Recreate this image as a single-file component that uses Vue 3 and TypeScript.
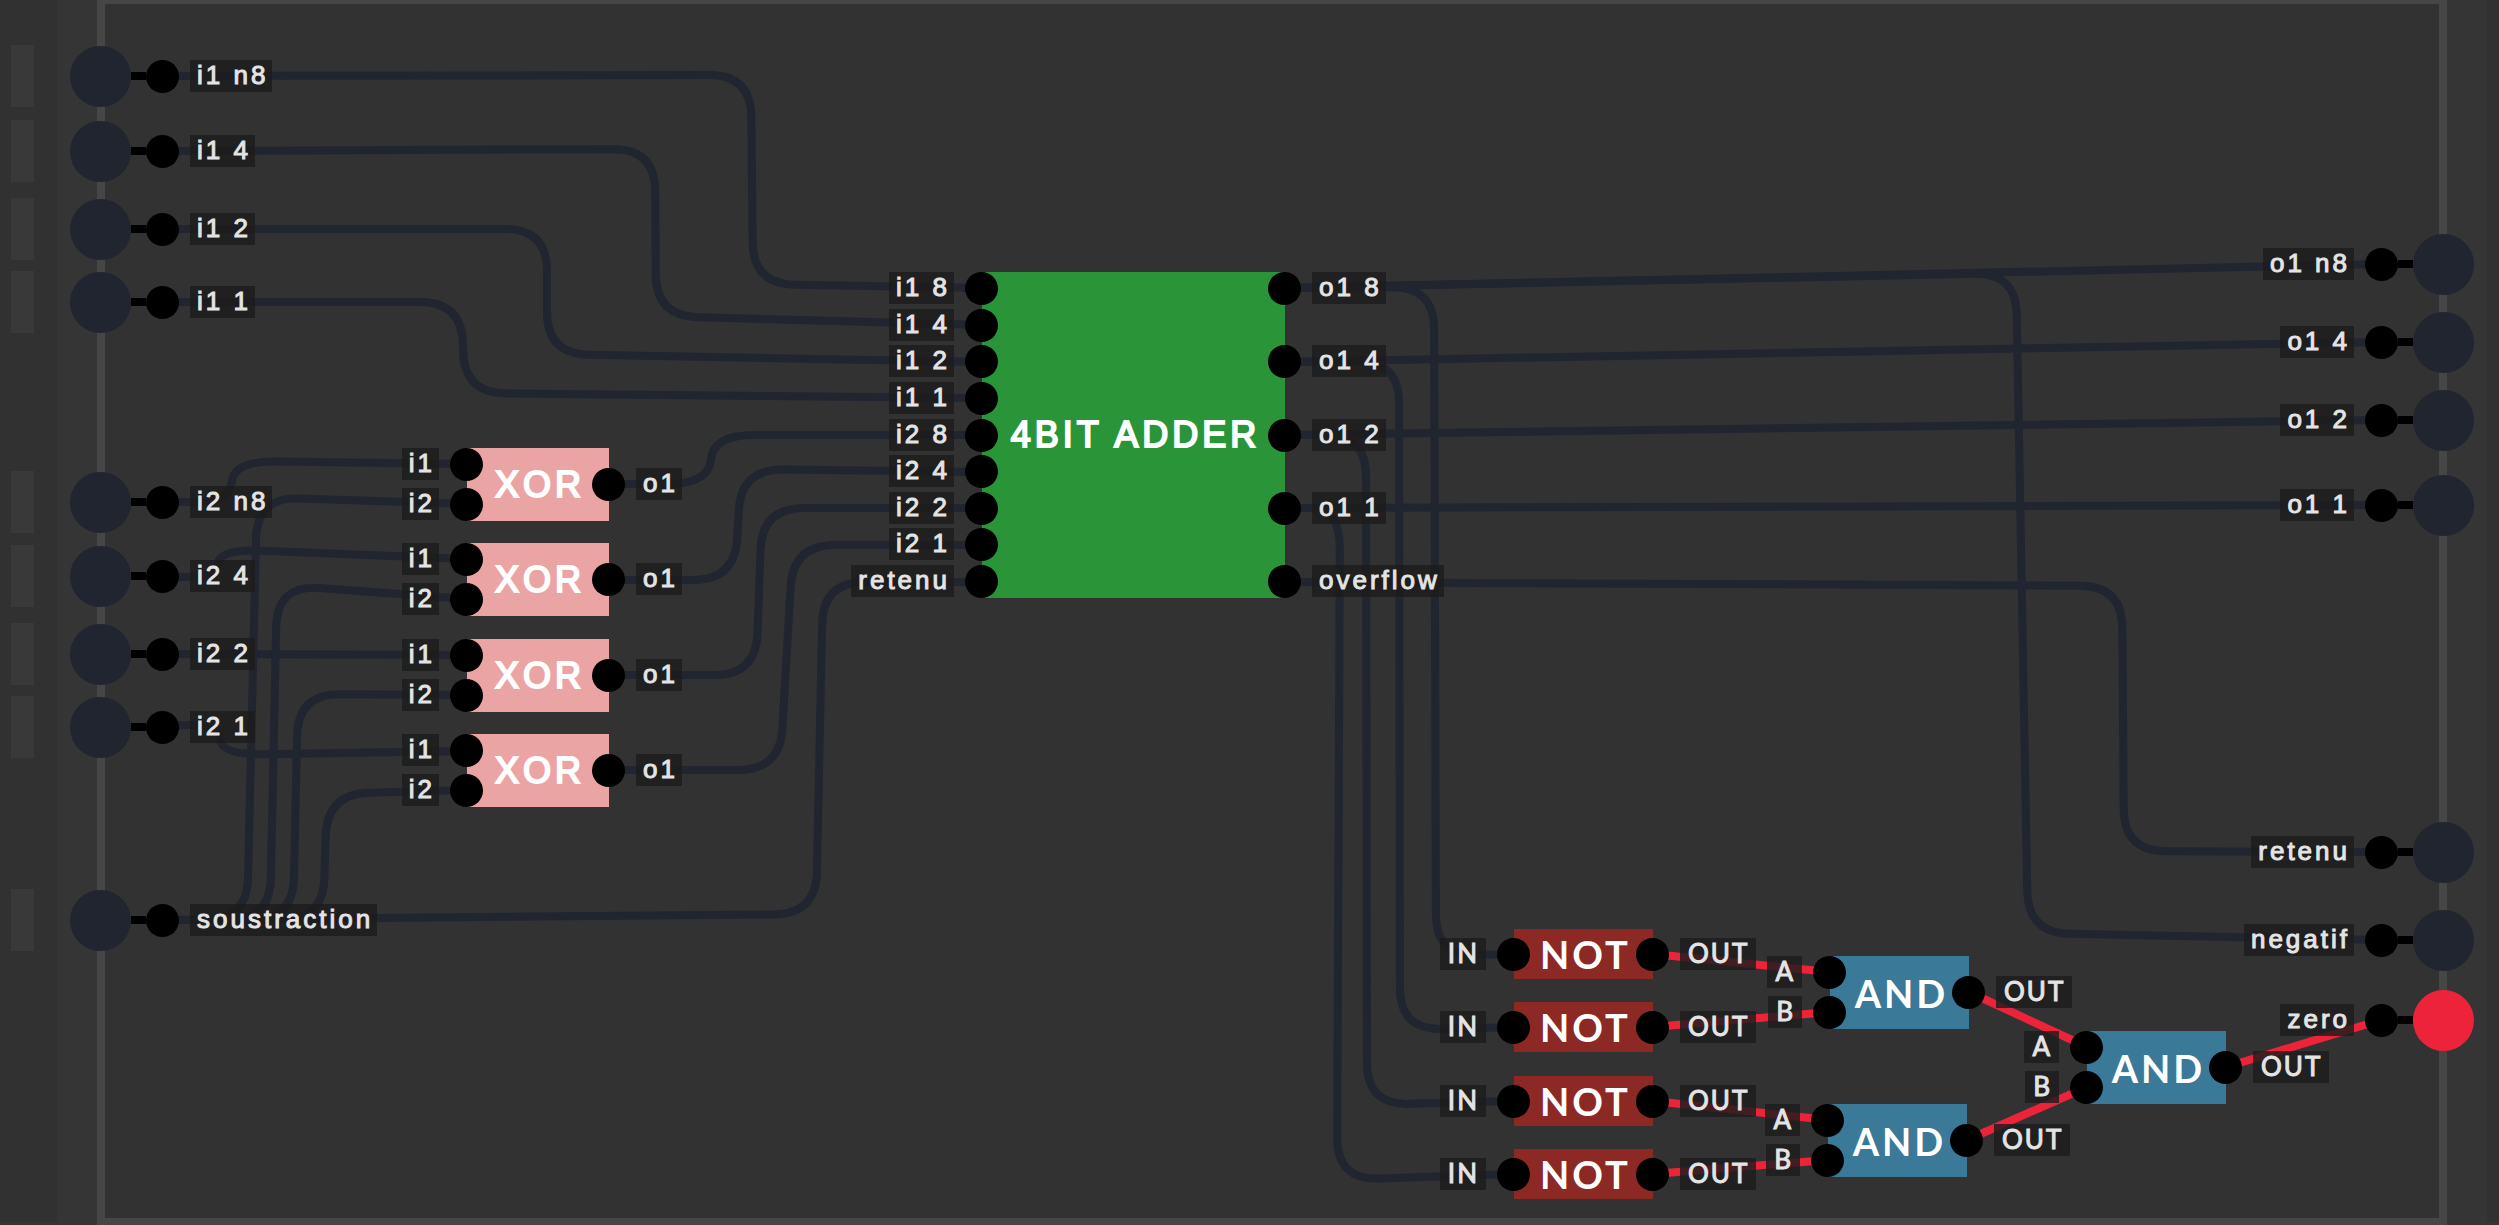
<script setup lang="ts">
import { computed, onBeforeUnmount, onMounted, ref } from 'vue'

type Point = [number, number]
type Face = 'custom' | 'builtin'

interface Pin { id: string; label: string; y: number; on: boolean }
interface Chip {
  id: string
  name: string
  kind: 'xor' | 'adder' | 'not' | 'and'
  face: Face
  x: number
  y: number
  inputs: string[]
  outputs: string[]
}
interface Wire { id: string; on?: boolean; points: Point[] }

const inputs = ref<Pin[]>([
  { id: 'i1-8', label: 'i1 n8', y: 76, on: false },
  { id: 'i1-4', label: 'i1 4', y: 151, on: false },
  { id: 'i1-2', label: 'i1 2', y: 229, on: false },
  { id: 'i1-1', label: 'i1 1', y: 302, on: false },
  { id: 'i2-8', label: 'i2 n8', y: 502, on: false },
  { id: 'i2-4', label: 'i2 4', y: 576, on: false },
  { id: 'i2-2', label: 'i2 2', y: 654, on: false },
  { id: 'i2-1', label: 'i2 1', y: 727, on: false },
  { id: 'sub', label: 'soustraction', y: 920, on: false },
])

const outputs: Pin[] = [
  { id: 'o-8', label: 'o1 n8', y: 264, on: false },
  { id: 'o-4', label: 'o1 4', y: 342, on: false },
  { id: 'o-2', label: 'o1 2', y: 420, on: false },
  { id: 'o-1', label: 'o1 1', y: 505, on: false },
  { id: 'carry', label: 'retenu', y: 852, on: false },
  { id: 'neg', label: 'negatif', y: 940, on: false },
  { id: 'zero', label: 'zero', y: 1020, on: true },
]

const xor = (n: number, y: number): Chip => ({
  id: `xor${n}`, name: 'XOR', kind: 'xor', face: 'custom', x: 467, y, inputs: ['i1', 'i2'], outputs: ['o1'],
})
const not = (n: number, y: number): Chip => ({
  id: `not${n}`, name: 'NOT', kind: 'not', face: 'builtin', x: 1514, y, inputs: ['IN'], outputs: ['OUT'],
})
const and = (n: number, x: number, y: number): Chip => ({
  id: `and${n}`, name: 'AND', kind: 'and', face: 'builtin', x, y, inputs: ['A', 'B'], outputs: ['OUT'],
})

const chips: Chip[] = [
  xor(1, 448), xor(2, 543), xor(3, 639), xor(4, 734),
  {
    id: 'adder', name: '4BIT ADDER', kind: 'adder', face: 'custom', x: 982, y: 272,
    inputs: ['i1 8', 'i1 4', 'i1 2', 'i1 1', 'i2 8', 'i2 4', 'i2 2', 'i2 1', 'retenu'],
    outputs: ['o1 8', 'o1 4', 'o1 2', 'o1 1', 'overflow'],
  },
  not(1, 929), not(2, 1002), not(3, 1076), not(4, 1149),
  and(1, 1830, 956), and(2, 1828, 1104), and(3, 2087, 1031),
]

// Negative x values are measured from the right edge of the board.
const wires: Wire[] = [
  { id: 'a8', points: [[162, 76], [751, 75], [753, 284], [982, 288]] },
  { id: 'a4', points: [[162, 151], [655, 149], [656, 316], [982, 325]] },
  { id: 'a2', points: [[162, 229], [547, 229], [547, 354], [982, 362]] },
  { id: 'a1', points: [[162, 302], [462, 302], [464, 393], [982, 398]] },
  { id: 'b8', points: [[162, 502], [230, 502], [234, 461], [467, 464]] },
  { id: 'b4', points: [[162, 577], [216, 577], [220, 549], [467, 559]] },
  { id: 'b2', points: [[162, 654], [467, 655]] },
  { id: 'b1', points: [[162, 726], [218, 724], [222, 755], [467, 751]] },
  { id: 's8', points: [[162, 920], [247, 920], [257, 497], [467, 504]] },
  { id: 's4', points: [[162, 920], [270, 920], [277, 585], [467, 599]] },
  { id: 's2', points: [[162, 920], [293, 920], [298, 694], [467, 695]] },
  { id: 's1', points: [[162, 920], [323, 920], [327, 794], [467, 790]] },
  { id: 'x8', points: [[609, 484], [709, 484], [713, 435], [982, 435]] },
  { id: 'x4', points: [[609, 580], [735, 580], [741, 469], [982, 472]] },
  { id: 'x2', points: [[609, 675], [756, 675], [762, 508], [982, 508]] },
  { id: 'x1', points: [[609, 770], [780, 770], [793, 545], [982, 545]] },
  { id: 'cin', points: [[162, 920], [816, 914], [823, 582], [982, 582]] },
  { id: 'q8', points: [[1285, 288], [-118, 264]] },
  { id: 'q4', points: [[1285, 362], [-118, 342]] },
  { id: 'q2', points: [[1285, 435], [-118, 420]] },
  { id: 'q1', points: [[1285, 508], [-118, 505]] },
  { id: 'neg', points: [[1285, 288], [-483, 273], [-471, 933], [-118, 940]] },
  { id: 'cout', points: [[1285, 582], [-377, 586], [-375, 851], [-118, 852]] },
  { id: 'n8', points: [[1285, 288], [1434, 287], [1436, 956], [1514, 954]] },
  { id: 'n4', points: [[1285, 362], [1399, 361], [1400, 1030], [1514, 1027]] },
  { id: 'n2', points: [[1285, 435], [1366, 435], [1367, 1105], [1514, 1101]] },
  { id: 'n1', points: [[1285, 508], [1340, 508], [1337, 1180], [1514, 1174]] },
  { id: 'm8', on: true, points: [[1653, 954], [1830, 972]] },
  { id: 'm4', on: true, points: [[1653, 1027], [1830, 1012]] },
  { id: 'm2', on: true, points: [[1653, 1101], [1828, 1120]] },
  { id: 'm1', on: true, points: [[1653, 1174], [1828, 1160]] },
  { id: 'p1', on: true, points: [[1969, 992], [2087, 1047]] },
  { id: 'p2', on: true, points: [[1967, 1140], [2087, 1087]] },
  { id: 'z', on: true, points: [[2226, 1067], [-118, 1020]] },
]

const BEND = 42
const board = ref<HTMLElement | null>(null)
const width = ref(document.documentElement.clientWidth)
let observer: ResizeObserver | undefined

onMounted(() => {
  if (!board.value) return
  width.value = board.value.clientWidth
  observer = new ResizeObserver(() => {
    if (board.value) width.value = board.value.clientWidth
  })
  observer.observe(board.value)
})
onBeforeUnmount(() => observer?.disconnect())

function toward(from: Point, to: Point, distance: number): Point {
  const length = Math.hypot(to[0] - from[0], to[1] - from[1])
  const k = length ? Math.min(distance / length, 0.5) : 0
  return [from[0] + (to[0] - from[0]) * k, from[1] + (to[1] - from[1]) * k]
}

function route(raw: Point[]): string {
  const pts = raw.map(([x, y]): Point => [x < 0 ? width.value + x : x, y])
  let d = `M${pts[0].join(' ')}`
  for (let i = 1; i < pts.length - 1; i++) {
    d += ` L${toward(pts[i], pts[i - 1], BEND).join(' ')}`
    d += ` Q${pts[i].join(' ')} ${toward(pts[i], pts[i + 1], BEND).join(' ')}`
  }
  return `${d} L${pts[pts.length - 1].join(' ')}`
}

const paths = computed(() => wires.map((w) => ({ id: w.id, on: w.on, d: route(w.points) })))
</script>

<template>
  <main ref="board" class="board">
    <div class="gutter"></div>
    <div class="margin"></div>
    <div class="sheet"></div>
    <div class="margin"></div>
    <div class="edge"></div>

    <svg class="wires" aria-hidden="true">
      <path v-for="p in paths" :key="p.id" :d="p.d" :class="{ on: p.on }" />
    </svg>

    <template v-for="pin in inputs" :key="pin.id">
      <span class="handle" :style="{ top: `${pin.y - 31}px` }"></span>
      <div class="pin pin-in" :style="{ top: `${pin.y - 31}px` }">
        <button
          :id="pin.id"
          type="button"
          class="lamp"
          :class="{ on: pin.on }"
          :aria-pressed="pin.on"
          :aria-labelledby="`${pin.id}-label`"
          @click="pin.on = !pin.on"
        ></button>
        <span class="stem"></span>
        <span class="dot"></span>
        <label :id="`${pin.id}-label`" :for="pin.id" class="tag custom">{{ pin.label }}</label>
      </div>
    </template>

    <div v-for="pin in outputs" :key="pin.id" class="pin pin-out" :style="{ top: `${pin.y - 31}px` }">
      <span class="lamp" :class="{ on: pin.on }"></span>
      <span class="stem"></span>
      <span class="dot"></span>
      <span class="tag custom">{{ pin.label }}</span>
    </div>

    <section
      v-for="chip in chips"
      :key="chip.id"
      class="chip"
      :class="[chip.kind, chip.face]"
      :style="{ left: `${chip.x}px`, top: `${chip.y}px` }"
    >
      <h2 class="name">{{ chip.name }}</h2>
      <ul class="ports ports-in" :class="{ single: chip.inputs.length === 1 }">
        <li v-for="label in chip.inputs" :key="label" class="dot">
          <span class="tag" :class="chip.face">{{ label }}</span>
        </li>
      </ul>
      <ul class="ports ports-out" :class="{ single: chip.outputs.length === 1 }">
        <li v-for="label in chip.outputs" :key="label" class="dot">
          <span class="tag" :class="chip.face">{{ label }}</span>
        </li>
      </ul>
    </section>
  </main>
</template>

<style>
body {
  margin: 0;
  background: #353535;
}
</style>

<style scoped>
.board {
  position: relative;
  display: flex;
  min-height: 100vh;
  overflow: hidden;
  background: #353535;
}

.gutter {
  width: 57px;
  margin-bottom: 3px;
  background: #313131;
}

.margin {
  width: 40px;
}

.sheet {
  flex: 1;
  border: solid #464646;
  border-width: 4px 8px 7px;
  background: #323232;
}

.edge {
  width: 12px;
  margin-bottom: 3px;
  background: #313131;
}

.wires {
  position: absolute;
  inset: 0;
  width: 100%;
  height: 100%;
}

.wires path {
  fill: none;
  stroke: #21252f;
  stroke-width: 8px;
}

.wires path.on {
  stroke: #ed2439;
}

.handle {
  position: absolute;
  left: 11px;
  width: 23px;
  height: 62px;
  background: #393939;
}

.pin {
  position: absolute;
  display: flex;
  align-items: center;
  height: 62px;
}

.pin-in {
  left: 70px;
}

.pin-out {
  right: 25px;
  flex-direction: row-reverse;
}

.lamp {
  flex: none;
  width: 61px;
  height: 61px;
  padding: 0;
  border: 0;
  border-radius: 50%;
  background: #21252f;
}

.lamp.on {
  background: #ed2439;
}

.stem {
  width: 15px;
  height: 8px;
  background: #000;
}

.dot {
  flex: none;
  width: 33px;
  height: 33px;
  border-radius: 50%;
  background: #000;
}

.pin .tag {
  margin: 0 11px;
}

.tag {
  box-sizing: border-box;
  height: 32px;
  background: rgba(28, 28, 28, 0.82);
  color: #e4e4e4;
  font-size: 26px;
  line-height: 31px;
  white-space: nowrap;
}

.tag.custom {
  padding: 0 4px 0 7px;
  font-family: 'Liberation Sans', Arial, sans-serif;
  letter-spacing: 3px;
  -webkit-text-stroke: 1px #e4e4e4;
}

.tag.builtin {
  padding: 0 7px 0 8px;
  font-family: Lato, sans-serif;
  letter-spacing: 2px;
  -webkit-text-stroke: 1px #e4e4e4;
}

.chip {
  position: absolute;
  display: flex;
  align-items: center;
  justify-content: center;
  color: #fff;
}

.xor {
  width: 142px;
  height: 73px;
  background: #eba4a4;
}

.adder {
  width: 303px;
  height: 326px;
  background: #2a9438;
}

.not {
  width: 139px;
  height: 50px;
  background: #8c2924;
}

.and {
  width: 139px;
  height: 73px;
  background: #3a7998;
}

.name {
  margin: 0;
  padding-left: 4px;
  line-height: 40px;
  white-space: nowrap;
}

.custom .name {
  font-family: 'Liberation Sans', Arial, sans-serif;
  font-size: 36px;
  font-weight: 400;
  letter-spacing: 4px;
  -webkit-text-stroke: 2px #fff;
}

.builtin .name {
  font-family: Lato, sans-serif;
  font-size: 38px;
  font-weight: 700;
  letter-spacing: 3px;
}

.ports {
  position: absolute;
  top: 0;
  bottom: 0;
  display: flex;
  flex-direction: column;
  justify-content: space-between;
  margin: 0;
  padding: 0;
  list-style: none;
}

.ports.single {
  justify-content: center;
}

.ports-in {
  left: -17px;
}

.ports-out {
  right: -16px;
}

.ports .dot {
  position: relative;
}

.ports .tag {
  position: absolute;
  top: 0;
}

.ports-in .tag {
  right: 44px;
}

.ports-out .tag {
  left: 44px;
}
</style>
